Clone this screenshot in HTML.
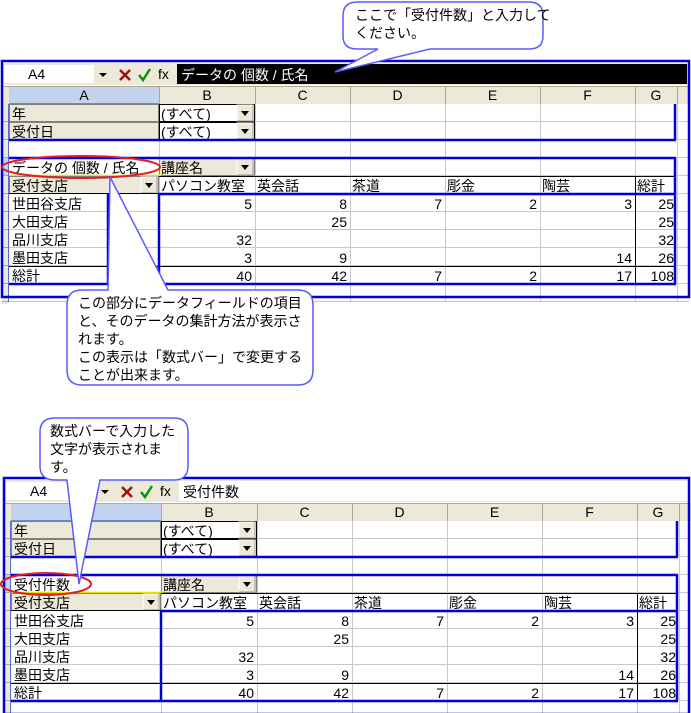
<!DOCTYPE html>
<html><head><meta charset="utf-8">
<style>
html,body{margin:0;padding:0;background:#fff;width:691px;height:713px;overflow:hidden}
svg{display:block}
text{font-family:"Liberation Sans","Noto Sans CJK JP",sans-serif;font-size:14px;fill:#000}
</style></head><body>
<svg id="s" width="691" height="713" xmlns="http://www.w3.org/2000/svg"></svg>
<script>
let o='';
function R(x,y,w,h,f,st,sw){o+=`<rect x="${x}" y="${y}" width="${w}" height="${h}" fill="${f||'none'}" ${st?`stroke="${st}" stroke-width="${sw||1}"`:''}/>`;}
function L(x1,y1,x2,y2,c,w){o+=`<line x1="${x1}" y1="${y1}" x2="${x2}" y2="${y2}" stroke="${c}" stroke-width="${w||1}"/>`;}
function T(x,y,t,a,c,extra){o+=`<text x="${x}" y="${y}" ${a?`text-anchor="${a}"`:''} ${c?`style="fill:${c}"`:''} ${extra||''}>${t}</text>`;}
function dd(x,y){R(x,y,16,16,'#ece9d8','#fff');L(x+16,y,x+16,y+16,'#999');L(x,y+16,x+16,y+16,'#999');o+=`<polygon points="${x+4},${y+6} ${x+12},${y+6} ${x+8},${y+11}" fill="#000"/>`;}
function sheet(ox,oy,formula,dark,label,midline){
 const X=[9,159,255,350,445,540,635,677,689].map(v=>v+ox);
 const top=61+oy;
 const RT=i=>104+oy+18*i;
 R(ox+2,top+2,686,22,'#ece9d8');
 R(ox+4,top+4,90,18,'#fff');
 T(ox+28,top+18,'A4');
 o+=`<polygon points="${ox+99},${top+12} ${ox+107},${top+12} ${ox+103},${top+16}" fill="#000"/>`;
 o+=`<path d="M${ox+120} ${top+9} L${ox+130} ${top+19} M${ox+130} ${top+9} L${ox+120} ${top+19}" stroke="#a01010" stroke-width="2.5"/>`;
 o+=`<path d="M${ox+139} ${top+14} L${ox+143} ${top+19} L${ox+150} ${top+8}" stroke="#109010" stroke-width="2.5" fill="none"/>`;
 T(ox+158,top+18,'fx','', '#000','style="font-style:italic;font-family:Liberation Serif;font-size:13px;font-weight:bold"');
 if(dark){R(ox+177,top+3,510,20,'#000');T(ox+181,top+19,formula,'','#fff','style="fill:#fff;font-size:15px"');}
 else {R(ox+177,top+3,510,20,'#fff');T(ox+181,top+19,formula,'','#000','style="font-size:15px"');}
 const hy=RT(0)-18;
 R(ox+2,hy,687,18,'#ece9d8');
 R(X[0],hy,X[1]-X[0],18,'#c3d3ee');
 L(X[0],hy+17.5,X[1],hy+17.5,'#6a8ccc',1);
 const hn=['A','B','C','D','E','F','G'];
 for(let i=0;i<7;i++){T((X[i]+X[i+1])/2,hy+14,hn[i],'middle');L(X[i+1]+.5,hy,X[i+1]+.5,hy+18,'#aca899');}
 L(ox+2,hy+.5,689,hy+.5,'#aca899');
 R(ox+2,RT(0),7,200,'#ece9d8');
 R(ox+2,RT(3),7,18,'#c3d3ee');
 for(let i=0;i<11;i++)L(ox+2,RT(i)+17.5,X[0],RT(i)+17.5,'#aca899');
 for(let i=0;i<11;i++)L(X[0],RT(i)+17.5,689,RT(i)+17.5,'#c8c8c8');
 for(let j=1;j<8;j++)L(X[j]+.5,RT(0),X[j]+.5,RT(11),'#c8c8c8');
 const pf=['年','受付日'];
 for(let i=0;i<2;i++){const y=RT(i);
  R(X[0]+.5,y+.5,X[1]-X[0]-1,17,'#ece9d8','#808080');
  T(X[0]+3,y+15,pf[i]);
  R(X[1]+.5,y+.5,X[2]-X[1]-1,17,'#fff','#000');
  T(X[1]+2,y+15,'(すべて)');dd(X[2]-18,y+1);}
 {const y=RT(3);R(X[0],y,X[1]-X[0],18,'#fff');T(X[0]+3,y+15,label);
  L(X[0],y+17.5,X[1],y+17.5,'#e8e000',1.5);
  R(X[1]+.5,y+.5,X[2]-X[1]-1,17,'#ece9d8','#808080');T(X[1]+2,y+15,'講座名');dd(X[2]-18,y+1);
  R(X[1]-1,y-1,3,3,'#e8e000');R(X[1]-1,y+16,3,3,'#e8e000');}
 {const y=RT(4);R(X[0]+.5,y+.5,X[1]-X[0]-1,17,'#ece9d8','#808080');T(X[0]+3,y+15,'受付支店');dd(X[1]-18,y+1);
  const hs=['パソコン教室','英会話','茶道','彫金','陶芸','総計'];
  for(let j=1;j<7;j++){T(X[j]+2,y+15,hs[j-1]);}
  L(X[1],y+.5,X[7]-2,y+.5,'#000');}
 const names=['世田谷支店','大田支店','品川支店','墨田支店','総計'];
 const data=[['5','8','7','2','3','25'],['','25','','','','25'],['32','','','','','32'],['3','9','','','14','26'],['40','42','7','2','17','108']];
 for(let i=0;i<5;i++){const y=RT(5+i);R(X[0]+1,y,X[1]-X[0]-2,17,'#fff');T(X[0]+3,y+15,names[i]);
  for(let j=0;j<6;j++)if(data[i][j])T(X[j+2]-3,y+15,data[i][j],'end');}
 L(X[0],RT(9)+.5,X[7]-2,RT(9)+.5,'#000');
 L(X[6]+.5,RT(4),X[6]+.5,RT(10),'#000');
 L(X[0],RT(5)-.5,X[1],RT(5)-.5,'#000');
 const B='#0000dd';const br=X[7]-2;
 L(X[0],RT(1)+18,br+1,RT(1)+18,B,2.5);
 L(br,RT(0),br,RT(2),B,2.5);
 L(X[0],RT(3),br+1,RT(3),B,2.5);
 L(br,RT(3),br,RT(10),B,2.5);
 L(X[0],RT(10),br+1,RT(10),B,2.5);
 L(X[1],RT(5),br,RT(5),B,2.5);
 L(X[1],RT(5),X[1],RT(10),B,2.5);
 if(midline)L(X[0]+99,RT(5),X[0]+99,RT(10),B,2.5);
 L(X[0]-.5,RT(0),X[0]-.5,RT(11),'#5a6ad0',1);
 R(ox+2,top,687-ox,236,'none',B,2.5);
}
o+=`<rect width="691" height="713" fill="#fff"/>`;
sheet(0,0,'データの 個数 / 氏名',true,'データの 個数 / 氏名',true);
sheet(2,417,'受付件数',false,'受付件数',false);
o+=`<ellipse cx="81" cy="167" rx="79" ry="11" fill="none" stroke="#e02020" stroke-width="2"/>`;
o+=`<ellipse cx="46" cy="584" rx="45" ry="11" fill="none" stroke="#e02020" stroke-width="2"/>`;
o+=`<path d="M357 2 H529 Q543 2 543 16 V36 Q543 49 529 49 H430 L335 72 L378 49 H357 Q343 49 343 36 V16 Q343 2 357 2 Z" fill="#fff" stroke="#5a5aff" stroke-width="1.5"/>`;
T(355,20,'ここで「受付件数」と入力して');T(355,38,'ください。');
o+=`<path d="M82 290 H108 L110 177 L168 290 H298 Q313 290 313 305 V370 Q313 385 298 385 H82 Q67 385 67 370 V305 Q67 290 82 290 Z" fill="#fff" stroke="#5a5aff" stroke-width="1.5"/>`;
T(78,308,'この部分にデータフィールドの項目');T(78,326,'と、そのデータの集計方法が表示さ');T(78,344,'れます。');T(78,362,'この表示は「数式バー」で変更する');T(78,380,'ことが出来ます。');
o+=`<path d="M55 418 H174 Q188 418 188 432 V466 Q188 480 174 480 H100 L79 584 L67 480 H55 Q40 480 40 466 V432 Q40 418 55 418 Z" fill="#fff" stroke="#5a5aff" stroke-width="1.5"/>`;
T(50,436,'数式バーで入力した');T(50,454,'文字が表示されま');T(50,472,'す。');
document.getElementById('s').innerHTML=o;
</script>
</body></html>
